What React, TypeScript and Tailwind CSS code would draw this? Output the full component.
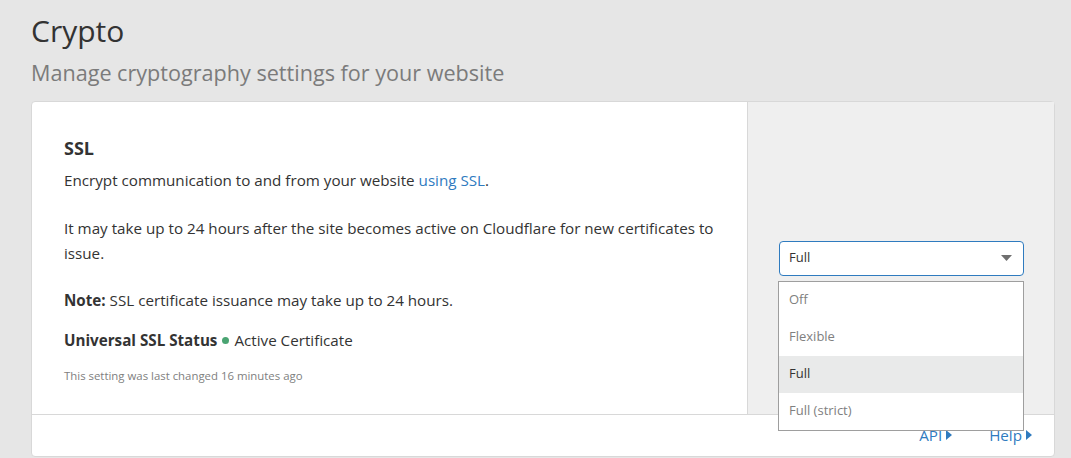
import { useState } from 'react';

const options = ['Off', 'Flexible', 'Full', 'Full (strict)'];

// Small solid right-pointing caret used by footer links
function Caret() {
  return (
    <svg width="6" height="10" viewBox="0 0 6 10" className="ml-[4px] inline-block">
      <path d="M0 0 L6 5 L0 10 Z" fill="currentColor" />
    </svg>
  );
}

function SslSelect() {
  const [value, setValue] = useState('Full');

  return (
    <div className="relative w-full">
      <div className="flex h-[35px] items-center justify-between rounded-[4px] border border-[#2f7bbf] bg-white pl-[9px] pr-[11px] text-[13px] text-[#333]">
        <span>{value}</span>
        <svg width="11" height="6" viewBox="0 0 11 6">
          <path d="M0 0 L11 0 L5.5 6 Z" fill="#6f6f6f" />
        </svg>
      </div>
      {/* open dropdown list */}
      <ul className="absolute left-[-1px] right-0 top-[40px] z-10 border border-[#9e9e9e] bg-white text-[13px]">
        {options.map((opt) => (
          <li
            key={opt}
            onClick={() => setValue(opt)}
            className={
              opt === value
                ? 'flex h-[37px] items-center bg-[#e9eaea] pl-[10px] text-[#333]'
                : 'flex h-[37px] items-center pl-[10px] text-[#808080]'
            }
          >
            {opt}
          </li>
        ))}
      </ul>
    </div>
  );
}

export default function App() {
  return (
    <div
      className="min-h-screen bg-[#e6e6e6] px-[31px] pt-[9px] text-[#333]"
      style={{ fontFamily: '"Open Sans", "Liberation Sans", sans-serif' }}
    >
      <h1 className="text-[30px] leading-[44px] text-[#333]">Crypto</h1>
      <p className="mt-[5px] text-[21.6px] leading-[30px] text-[#7b7b7b]">
        Manage cryptography settings for your website
      </p>

      <div className="mt-[13px] w-[1024px] overflow-visible rounded-[4px] border border-[#d8d8d8] bg-white">
        <div className="flex">
          <div className="flex-1 pb-[30px] pl-[32px] pr-[24px] pt-[33px] text-[15.2px] leading-[25px]">
            <h2 className="text-[18px] font-bold leading-[26px] text-[#333]">SSL</h2>
            <p className="mt-[7px]">
              Encrypt communication to and from your website{' '}
              <a className="text-[#2f7bbf]">using SSL</a>.
            </p>
            <p className="mt-[23px]">
              It may take up to 24 hours after the site becomes active on Cloudflare for new
              certificates to issue.
            </p>
            <p className="mt-[22px]">
              <span className="font-bold">Note:</span> SSL certificate issuance may take up
              to 24 hours.
            </p>
            <p className="mt-[15px] flex items-center">
              <span className="font-bold">Universal SSL Status</span>
              <span className="mx-[5px] inline-block h-[7px] w-[7px] rounded-full bg-[#4aa472]" />
              Active Certificate
            </p>
            <p className="mt-[15px] text-[11.4px] leading-[16px] text-[#808080]">
              This setting was last changed 16 minutes ago
            </p>
          </div>
          <div className="flex w-[307px] items-center border-l border-[#d8d8d8] bg-[#efefef] pl-[31px] pr-[30px]">
            <SslSelect />
          </div>
        </div>
        <div className="flex h-[42px] items-center justify-end gap-[37px] border-t border-[#d8d8d8] pr-[22px] text-[15.2px] text-[#2f7bbf]">
          <a className="flex items-center">
            API
            <Caret />
          </a>
          <a className="flex items-center">
            Help
            <Caret />
          </a>
        </div>
      </div>
    </div>
  );
}
